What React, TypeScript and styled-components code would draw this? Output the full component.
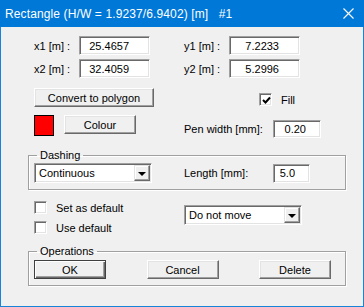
import styled, { createGlobalStyle } from "styled-components";

const GlobalStyle = createGlobalStyle`
    html, body {
        margin: 0;
        padding: 0;
        background: #f0f0f0;
    }
    body {
        font-family: "Liberation Sans", Arial, sans-serif;
        font-size: 11px;
        color: #000000;
    }
`;

export default function App() {
    return (
        <>
            <GlobalStyle />
            <Window>
                <TitleBar>
                    <Title>{"Rectangle (H/W = 1.9237/6.9402) [m]   #1"}</Title>
                    <Close>
                        <svg width="11" height="11" viewBox="0 0 11 11">
                            <path d="M0.5 0.5 L10.5 10.5 M10.5 0.5 L0.5 10.5" stroke="#ffffff" strokeWidth="1.1" />
                        </svg>
                    </Close>
                </TitleBar>

                <Body>
                    <Row $top={9}>
                        <Cell>
                            <Label $width={45}>x1 [m] :</Label>
                            <Field $width={71} $pad={20} readOnly value="25.4657" />
                        </Cell>
                        <Cell>
                            <Label $width={45}>y1 [m] :</Label>
                            <Field $width={71} $pad={20} readOnly value="7.2233" />
                        </Cell>
                    </Row>
                    <Row $top={4}>
                        <Cell>
                            <Label $width={45}>x2 [m] :</Label>
                            <Field $width={71} $pad={20} readOnly value="32.4059" />
                        </Cell>
                        <Cell>
                            <Label $width={45}>y2 [m] :</Label>
                            <Field $width={71} $pad={20} readOnly value="5.2996" />
                        </Cell>
                    </Row>

                    <Row $top={10}>
                        <Cell>
                            <Button $width={120}>Convert to polygon</Button>
                        </Cell>
                        <Cell $indent={75} $pt={5} $align="start">
                            <CheckOption>
                                <CheckBox>
                                    <svg width="9" height="9" viewBox="0 0 9 9">
                                        <path d="M1 4 L3.5 6.5 L8 1.5" stroke="#000" strokeWidth="2" fill="none" />
                                    </svg>
                                </CheckBox>
                                Fill
                            </CheckOption>
                        </Cell>
                    </Row>

                    <Row $top={8}>
                        <Cell $align="start">
                            <Swatch />
                            <Button $width={72}>Colour</Button>
                        </Cell>
                        <Cell $pt={5} $align="start">
                            <Label $width={89} $lh={18}>Pen width [mm]:</Label>
                            <Field $width={48} $height={18} $pad={14} readOnly value="0.20" />
                        </Cell>
                    </Row>

                    <Group $top={10}>
                        <Legend>Dashing</Legend>
                        <GroupRow>
                            <Cell>
                                <Select $width={118}>
                                    <span>Continuous</span>
                                    <DropButton><Arrow /></DropButton>
                                </Select>
                            </Cell>
                            <Cell>
                                <Label $width={89}>Length [mm]:</Label>
                                <Field $width={37} $pad={14} readOnly value="5.0" />
                            </Cell>
                        </GroupRow>
                    </Group>

                    <Row $top={11}>
                        <Stack>
                            <CheckOption>
                                <CheckBox />
                                Set as default
                            </CheckOption>
                            <CheckOption>
                                <CheckBox />
                                Use default
                            </CheckOption>
                        </Stack>
                        <Cell $pt={4} $align="start">
                            <Select $width={118}>
                                <span>Do not move</span>
                                <DropButton><Arrow /></DropButton>
                            </Select>
                        </Cell>
                    </Row>

                    <Group $top={10}>
                        <Legend>Operations</Legend>
                        <Buttons>
                            <Button $width={72} $primary>OK</Button>
                            <Button $width={72}>Cancel</Button>
                            <Button $width={72}>Delete</Button>
                        </Buttons>
                    </Group>
                </Body>
            </Window>
        </>
    );
}

const Window = styled.div`
    width: 364px;
    height: 307px;
    box-sizing: border-box;
    border: 1px solid #1883d7;
    border-top: none;
    background: #f0f0f0;
    display: flex;
    flex-direction: column;
`;

const TitleBar = styled.div`
    height: 27px;
    margin: 0 -1px;
    background: #0078d7;
    display: flex;
    align-items: center;
    justify-content: space-between;
    padding: 0 10px 0 5px;
    color: #ffffff;
    font-size: 12px;
`;

const Title = styled.span`
    white-space: pre;
    letter-spacing: 0.12px;
`;

const Close = styled.div`
    display: flex;
    align-items: center;
`;

const Body = styled.div`
    padding: 0 0 0 33px;
    display: flex;
    flex-direction: column;
`;

const Row = styled.div<{ $top: number }>`
    display: grid;
    grid-template-columns: 150px 1fr;
    margin-top: ${p => p.$top}px;
`;

const Cell = styled.div<{ $indent?: number; $align?: string; $pt?: number }>`
    display: flex;
    align-items: ${p => p.$align || "center"};
    padding-left: ${p => p.$indent || 0}px;
    padding-top: ${p => p.$pt || 0}px;
`;

const Label = styled.span<{ $width: number; $lh?: number }>`
    width: ${p => p.$width}px;
    flex: none;
    line-height: ${p => (p.$lh ? `${p.$lh}px` : "normal")};
`;

const Field = styled.input<{ $width: number; $height?: number; $pad: number }>`
    box-sizing: border-box;
    width: ${p => p.$width}px;
    height: ${p => p.$height || 19}px;
    margin: 0;
    padding: 0 ${p => p.$pad}px 0 0;
    text-align: right;
    font: inherit;
    color: #000;
    background: #ffffff;
    border: 1px solid;
    border-color: #a0a0a0 #ffffff #ffffff #a0a0a0;
    box-shadow: inset 1px 1px #696969, inset -1px -1px #e3e3e3;
    outline: none;
`;

const Button = styled.button<{ $width: number; $primary?: boolean }>`
    box-sizing: border-box;
    width: ${p => p.$width}px;
    height: 19px;
    margin: 0;
    padding: 0;
    font: inherit;
    color: #000;
    background: #f0f0f0;
    border: 1px solid;
    border-color: ${p => p.$primary ? "#404040" : "#ffffff #696969 #696969 #ffffff"};
    box-shadow: ${p => p.$primary
        ? "inset 1px 1px #ffffff, inset -1px -1px #696969, inset -2px -2px #a0a0a0"
        : "inset -1px -1px #a0a0a0, inset 1px 1px #e3e3e3"};
`;

const Swatch = styled.div`
    width: 20px;
    height: 21px;
    box-sizing: border-box;
    background: #ff0000;
    border: 1px solid #000000;
    margin-right: 10px;
`;

const CheckOption = styled.label`
    display: flex;
    align-items: center;
    gap: 9px;
    height: 13px;
`;

const CheckBox = styled.span`
    box-sizing: border-box;
    width: 13px;
    height: 13px;
    flex: none;
    background: #ffffff;
    border: 1px solid;
    border-color: #a0a0a0 #ffffff #ffffff #a0a0a0;
    box-shadow: inset 1px 1px #696969, inset -1px -1px #e3e3e3;
    display: flex;
    align-items: center;
    justify-content: center;
    svg {
        margin: 1px 0 0 1px;
    }
`;

const Stack = styled.div`
    display: flex;
    flex-direction: column;
    gap: 7px;
`;

const Select = styled.div<{ $width: number }>`
    box-sizing: border-box;
    width: ${p => p.$width}px;
    height: 20px;
    background: #ffffff;
    border: 1px solid;
    border-color: #a0a0a0 #ffffff #ffffff #a0a0a0;
    box-shadow: inset 1px 1px #696969, inset -1px -1px #e3e3e3;
    display: flex;
    align-items: center;
    justify-content: space-between;
    padding: 2px 1px 2px 4px;
`;

const DropButton = styled.span`
    box-sizing: border-box;
    width: 16px;
    height: 16px;
    background: #f0f0f0;
    border: 1px solid;
    border-color: #e3e3e3 #696969 #696969 #e3e3e3;
    box-shadow: inset -1px -1px #a0a0a0, inset 1px 1px #ffffff;
    display: flex;
    align-items: center;
    justify-content: center;
`;

const Arrow = styled.span`
    width: 0;
    height: 0;
    border-left: 4px solid transparent;
    border-right: 4px solid transparent;
    border-top: 4px solid #000000;
    margin-top: 1px;
`;

const Group = styled.fieldset<{ $top: number }>`
    box-sizing: border-box;
    width: 318px;
    margin: ${p => p.$top}px 0 0 -6px;
    padding: 1px 0 6px 5px;
    border: 1px solid #a0a0a0;
    box-shadow: 1px 1px 0 #ffffff, inset 1px 1px 0 #ffffff;
    min-width: 0;
`;

const Legend = styled.legend`
    margin-left: 3px;
    padding: 0 3px;
    line-height: 14px;
`;

const GroupRow = styled.div`
    display: grid;
    grid-template-columns: 150px 1fr;
`;

const Buttons = styled.div`
    display: flex;
    justify-content: space-between;
    width: 297px;
    padding-top: 1px;
`;
